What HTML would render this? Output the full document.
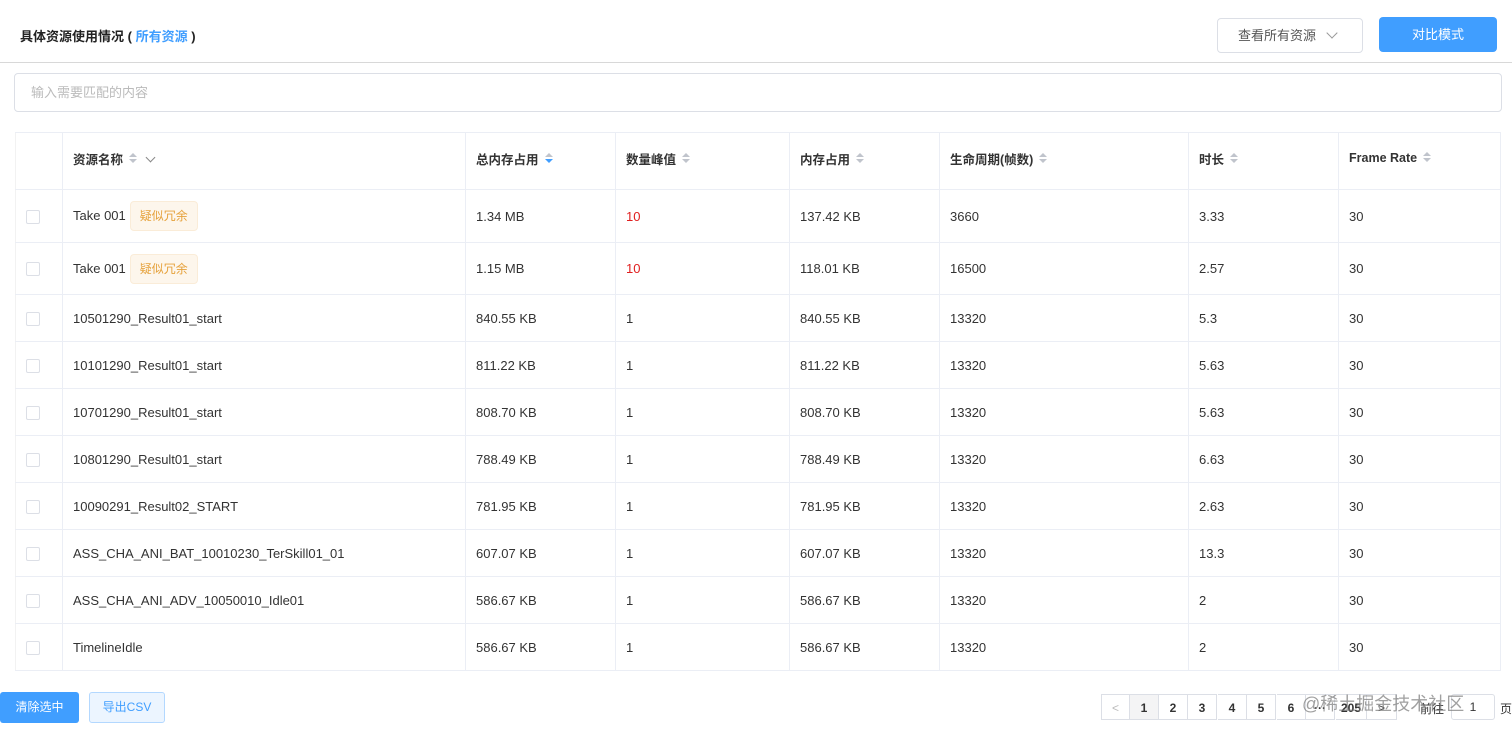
<!DOCTYPE html><html><head><meta charset="utf-8"><style>
body{margin:0;width:1512px;height:732px;background:#fff;font-family:"Liberation Sans","Noto Sans CJK SC",sans-serif;font-size:13px;color:#333;position:relative;overflow:hidden}
.a{position:absolute}
table{position:absolute;left:15px;top:132px;border-collapse:collapse;table-layout:fixed;width:1485px}
td,th{border:1px solid #ebeef5;border-left:none;border-right:1px solid #ebeef5;padding:0 0 0 10px;text-align:left;white-space:nowrap}
td:first-child,th:first-child{border-left:1px solid #f2f2f2}
th{font-weight:bold;color:#333;height:57px;font-size:12.5px;padding-bottom:6px;box-sizing:border-box}
.s{display:inline-block;width:0;margin-left:6px;vertical-align:middle;position:relative;height:12px;top:-1px}
.s:before{content:"";position:absolute;left:0;top:0;border:4px solid transparent;border-bottom:4px solid #c0c4cc;border-top:none}
.s:after{content:"";position:absolute;left:0;top:6px;border:4px solid transparent;border-top:4px solid #c0c4cc;border-bottom:none}
.s.d:after{border-top-color:#409eff}
.cb{display:inline-block;width:12px;height:12px;border:1px solid #dcdfe6;border-radius:2px;vertical-align:middle}
.tag{display:inline-block;background:#fdf6ec;border:1px solid #faecd8;color:#e6a23c;border-radius:4px;padding:0 9px;height:28px;line-height:28px;margin-left:4px;font-size:12px}
.r{color:#e02020}
.pg{position:absolute;top:694px;height:26px;line-height:26px;width:29px;border:1px solid #dcdfe6;border-left:none;text-align:center;font-weight:bold;font-size:12px;box-sizing:border-box}
</style></head><body>
<div class="a" style="left:20px;top:26px;font-weight:bold;font-size:13px;color:#222">具体资源使用情况 ( <span style="color:#409eff">所有资源</span> )</div>
<div class="a" style="left:1217px;top:18px;width:146px;height:35px;border:1px solid #dcdfe6;border-radius:4px;box-sizing:border-box;line-height:33px;padding-left:20px;color:#555;font-size:13px">查看所有资源 <span style="display:inline-block;width:7px;height:7px;border-right:1px solid #999;border-bottom:1px solid #999;transform:rotate(45deg);margin-left:8px;position:relative;top:-3px"></span></div>
<div class="a" style="left:1379px;top:17px;width:118px;height:35px;background:#409eff;border-radius:4px;color:#fff;text-align:center;line-height:35px;font-size:13px">对比模式</div>
<div class="a" style="left:0;top:62px;width:1512px;height:1px;background:#d8d8d8"></div>
<div class="a" style="left:14px;top:73px;width:1488px;height:39px;border:1px solid #dcdfe6;border-radius:4px;box-sizing:border-box;line-height:37px;padding-left:16px;color:#bbb">输入需要匹配的内容</div>
<table>
<colgroup><col style="width:47px"><col style="width:403px"><col style="width:150px"><col style="width:174px"><col style="width:150px"><col style="width:249px"><col style="width:150px"><col style="width:162px"></colgroup>
<tr><th></th><th>资源名称<span class="s"></span><span style="display:inline-block;width:6px;height:6px;border-right:1px solid #888;border-bottom:1px solid #888;transform:rotate(45deg);margin-left:18px;position:relative;top:-3px"></span></th><th>总内存占用<span class="s d"></span></th><th>数量峰值<span class="s"></span></th><th>内存占用<span class="s"></span></th><th>生命周期(帧数)<span class="s"></span></th><th>时长<span class="s"></span></th><th>Frame Rate<span class="s"></span></th></tr>
<tr style="height:53px"><td><span class="cb"></span></td><td>Take 001<span class="tag">疑似冗余</span></td><td>1.34 MB</td><td class="r">10</td><td>137.42 KB</td><td>3660</td><td>3.33</td><td>30</td></tr>
<tr style="height:52px"><td><span class="cb"></span></td><td>Take 001<span class="tag">疑似冗余</span></td><td>1.15 MB</td><td class="r">10</td><td>118.01 KB</td><td>16500</td><td>2.57</td><td>30</td></tr>
<tr style="height:47px"><td><span class="cb"></span></td><td>10501290_Result01_start</td><td>840.55 KB</td><td>1</td><td>840.55 KB</td><td>13320</td><td>5.3</td><td>30</td></tr>
<tr style="height:47px"><td><span class="cb"></span></td><td>10101290_Result01_start</td><td>811.22 KB</td><td>1</td><td>811.22 KB</td><td>13320</td><td>5.63</td><td>30</td></tr>
<tr style="height:47px"><td><span class="cb"></span></td><td>10701290_Result01_start</td><td>808.70 KB</td><td>1</td><td>808.70 KB</td><td>13320</td><td>5.63</td><td>30</td></tr>
<tr style="height:47px"><td><span class="cb"></span></td><td>10801290_Result01_start</td><td>788.49 KB</td><td>1</td><td>788.49 KB</td><td>13320</td><td>6.63</td><td>30</td></tr>
<tr style="height:47px"><td><span class="cb"></span></td><td>10090291_Result02_START</td><td>781.95 KB</td><td>1</td><td>781.95 KB</td><td>13320</td><td>2.63</td><td>30</td></tr>
<tr style="height:47px"><td><span class="cb"></span></td><td>ASS_CHA_ANI_BAT_10010230_TerSkill01_01</td><td>607.07 KB</td><td>1</td><td>607.07 KB</td><td>13320</td><td>13.3</td><td>30</td></tr>
<tr style="height:47px"><td><span class="cb"></span></td><td>ASS_CHA_ANI_ADV_10050010_Idle01</td><td>586.67 KB</td><td>1</td><td>586.67 KB</td><td>13320</td><td>2</td><td>30</td></tr>
<tr style="height:47px"><td><span class="cb"></span></td><td>TimelineIdle</td><td>586.67 KB</td><td>1</td><td>586.67 KB</td><td>13320</td><td>2</td><td>30</td></tr>
</table>
<div class="a" style="left:0;top:692px;width:79px;height:31px;background:#409eff;color:#fff;border-radius:3px;text-align:center;line-height:31px;font-size:12px">清除选中</div>
<div class="a" style="left:89px;top:692px;width:76px;height:31px;background:#ecf5ff;border:1px solid #b3d8ff;box-sizing:border-box;color:#409eff;border-radius:3px;text-align:center;line-height:29px;font-size:12px">导出CSV</div>
<div class="pg" style="left:1101px;border-left:1px solid #dcdfe6;color:#bbb;font-weight:normal">&lt;</div>
<div class="pg" style="left:1130px;background:#f4f4f5">1</div>
<div class="pg" style="left:1159px">2</div>
<div class="pg" style="left:1188px">3</div>
<div class="pg" style="left:1218px">4</div>
<div class="pg" style="left:1247px">5</div>
<div class="pg" style="left:1277px">6</div>
<div class="pg" style="left:1306px">···</div>
<div class="pg" style="left:1336px;width:31px">205</div>
<div class="pg" style="left:1367px;width:30px;font-weight:normal">&gt;</div>
<div class="a" style="left:1420px;top:700px;font-size:12px">前往</div>
<div class="a" style="left:1451px;top:694px;width:44px;height:26px;border:1px solid #dcdfe6;border-radius:3px;box-sizing:border-box;text-align:center;line-height:24px;font-size:12px">1</div>
<div class="a" style="left:1500px;top:700px;font-size:12px">页</div>
<div class="a" style="left:1302px;top:690px;font-size:18px;color:rgba(120,120,120,0.7)">@稀土掘金技术社区</div>
</body></html>
